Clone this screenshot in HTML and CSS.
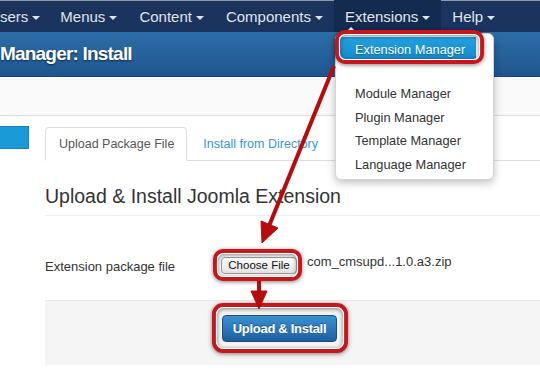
FILE: index.html
```html
<!DOCTYPE html>
<html lang="en">
<head>
  <meta charset="UTF-8" />
  <title>Extension Manager: Install</title>
  <link rel="stylesheet" href="styles.css">
</head>
<body>
  <nav class="navbar">
    <ul class="nav-menu">
      <li class="nav-item">sers<span class="caret"></span></li>
      <li class="nav-item">Menus<span class="caret"></span></li>
      <li class="nav-item">Content<span class="caret"></span></li>
      <li class="nav-item">Components<span class="caret"></span></li>
      <li class="nav-item active">Extensions<span class="caret"></span>
        <ul class="dropdown">
          <li class="dropdown-item selected">Extension Manager</li>
          <li class="dropdown-item first">Module Manager</li>
          <li class="dropdown-item">Plugin Manager</li>
          <li class="dropdown-item">Template Manager</li>
          <li class="dropdown-item">Language Manager</li>
        </ul>
      </li>
      <li class="nav-item">Help<span class="caret"></span></li>
    </ul>
  </nav>

  <header class="title-bar">
    <h1 class="page-title">Manager: Install</h1>
  </header>

  <div class="subhead"></div>

  <main class="content">
    <aside class="sidebar">
      <div class="side-active"></div>
    </aside>

    <section class="panel">
      <ul class="tabs">
        <li class="tab active">Upload Package File</li>
        <li class="tab">Install from Directory</li>
      </ul>

      <h2 class="legend">Upload &amp; Install Joomla Extension</h2>

      <div class="form-row">
        <label class="form-label">Extension package file</label>
        <span class="file-button">Choose File</span>
        <span class="file-name">com_cmsupd...1.0.a3.zip</span>
      </div>

      <div class="form-actions">
        <span class="btn-primary">Upload &amp; Install</span>
      </div>
    </section>
  </main>

  <!-- annotation layer drawn over the screenshot -->
  <svg class="annotations" width="540" height="378" viewBox="0 0 540 378">
    <g class="frames">
      <rect x="337" y="32" width="145" height="30" rx="8" fill="none" stroke="#c7171d" stroke-width="4"/>
      <rect x="339.5" y="34.5" width="140" height="25" rx="6" fill="none" stroke="#fff" stroke-width="1.2"/>

      <rect x="215" y="251" width="85" height="28" rx="8" fill="none" stroke="#c7171d" stroke-width="4"/>
      <rect x="217.5" y="253.5" width="80" height="23" rx="6" fill="none" stroke="#fff" stroke-width="1.2"/>

      <rect x="214" y="305" width="132" height="46" rx="9" fill="none" stroke="#c7171d" stroke-width="4"/>
      <rect x="216.5" y="307.5" width="127" height="41" rx="7" fill="none" stroke="#fff" stroke-width="1.2"/>
    </g>
    <g class="arrows" fill="#b70b0d" stroke="#b70b0d">
      <line x1="334" y1="66" x2="269" y2="226" stroke-width="4"/>
      <polygon points="262,243 278,228 261,221" stroke-width="1"/>
      <line x1="259" y1="281" x2="259" y2="293" stroke-width="4"/>
      <polygon points="251,291 267,291 259,309" stroke-width="1"/>
    </g>
  </svg>
</body>
</html>
```

FILE: styles.css
```css
* {
  box-sizing: border-box;
  margin: 0;
  padding: 0;
}

body {
  width: 540px;
  height: 378px;
  overflow: hidden;
  position: relative;
  background: #fff;
  font-family: 'Liberation Sans', Arial, sans-serif;
  color: #333;
}

ul {
  list-style: none;
}

/* top navbar */
.navbar {
  height: 32px;
  background: #1a345e;
  box-shadow: inset 0 1px 0 #8f99a8;
}

.nav-menu {
  display: flex;
  margin-left: -11px;
  height: 32px;
}

.nav-item {
  position: relative;
  display: flex;
  align-items: center;
  padding: 1px 11px 0;
  height: 32px;
  font-size: 15px;
  color: #e2e9f2;
  text-shadow: 0 -1px 0 rgba(0, 0, 0, 0.4);
  white-space: nowrap;
}

.nav-item:first-child {
  padding-right: 9px;
}

.nav-item.active {
  background: #142b50;
}

.caret {
  margin-left: 4px;
  margin-top: 2px;
  border-top: 4px solid #dde5ef;
  border-left: 4px solid transparent;
  border-right: 4px solid transparent;
}

/* dropdown of Extensions */
.dropdown {
  position: absolute;
  top: 33px;
  left: 1px;
  width: 159px;
  height: 147px;
  padding-top: 3px;
  background: #fff;
  border: 1px solid #d4d4d4;
  border-radius: 6px;
  box-shadow: 0 3px 8px rgba(0, 0, 0, 0.25);
  z-index: 5;
  text-shadow: none;
}

.dropdown::before {
  content: '';
  position: absolute;
  top: -7px;
  left: 9px;
  border-bottom: 6px solid #fff;
  border-left: 6px solid transparent;
  border-right: 6px solid transparent;
}

.dropdown-item {
  height: 23.5px;
  line-height: 23.5px;
  padding-left: 19px;
  font-size: 12.8px;
  color: #333;
}

.dropdown-item.selected {
  height: 25px;
  line-height: 25px;
  margin: 0 17px 0 4px;
  padding-left: 15px;
  color: #fff;
  background: linear-gradient(#22a0e0, #1189cc);
  text-shadow: 0 1px 1px rgba(0, 0, 0, 0.3);
}

.dropdown-item.first {
  margin-top: 20px;
}

/* title bar */
.title-bar {
  height: 45px;
  display: flex;
  align-items: center;
  background: linear-gradient(#2d6ea8, #1f558f);
  border-bottom: 1px solid #1a4677;
}

.page-title {
  font-size: 19px;
  font-weight: bold;
  letter-spacing: -0.8px;
  color: #fff;
  text-shadow: 0 1px 2px rgba(0, 0, 0, 0.6);
  white-space: nowrap;
}

.subhead {
  height: 39px;
  background: #fafafa;
  border-bottom: 1px solid #dcdcdc;
}

/* main content */
.content {
  display: flex;
}

.sidebar {
  width: 29px;
  padding-top: 10px;
}

.side-active {
  height: 23px;
  background: #1b9ad8;
  border: 1px solid #1584c4;
  border-left: none;
}

.panel {
  flex: 1;
  margin-left: 16px;
  padding-top: 11px;
}

.tabs {
  display: flex;
  border-bottom: 1px solid #ddd;
}

.tab {
  height: 34px;
  line-height: 33px;
  padding: 0 12px 0 13px;
  margin-right: 2px;
  margin-bottom: -1px;
  font-size: 12.5px;
  color: #3896d6;
  border: 1px solid transparent;
  border-radius: 4px 4px 0 0;
}

.tab.active {
  color: #555;
  background: #fff;
  border-color: #ddd;
  border-bottom-color: #fff;
}

.legend {
  margin-top: 23px;
  padding-bottom: 7px;
  line-height: 24px;
  font-size: 19.5px;
  font-weight: normal;
  color: #333;
  border-bottom: 1px solid #eee;
}

.form-row {
  display: flex;
  align-items: flex-start;
  margin-top: 41px;
  height: 17px;
}

.form-label {
  width: 176px;
  margin-top: 2px;
  font-size: 13px;
  line-height: 15px;
  color: #333;
}

.file-button {
  width: 76px;
  height: 17px;
  line-height: 15px;
  text-align: center;
  font-size: 11.5px;
  color: #111;
  background: linear-gradient(#fdfdfd, #e2e2e2);
  border: 1px solid #9c9c9c;
  border-radius: 4px;
}

.file-name {
  margin-left: 10px;
  margin-top: -3px;
  font-size: 13px;
  line-height: 15px;
  color: #333;
}

.form-actions {
  margin-top: 26px;
  height: 65px;
  padding: 14px 0 0 177px;
  background: #f5f5f5;
  border-top: 1px solid #ebebeb;
}

.btn-primary {
  display: inline-block;
  width: 115px;
  height: 27px;
  line-height: 25px;
  text-align: center;
  font-size: 13px;
  font-weight: bold;
  letter-spacing: -0.3px;
  color: #fff;
  text-shadow: 0 -1px 0 rgba(0, 0, 0, 0.35);
  background: linear-gradient(#3b91d3, #1e5e9f);
  border: 1px solid #1a4c82;
  border-radius: 4px;
}

/* red callouts */
.annotations {
  position: absolute;
  top: 0;
  left: 0;
  z-index: 10;
  pointer-events: none;
}

.frames {
  filter: drop-shadow(0 1px 2px rgba(0, 0, 0, 0.5));
}
```
